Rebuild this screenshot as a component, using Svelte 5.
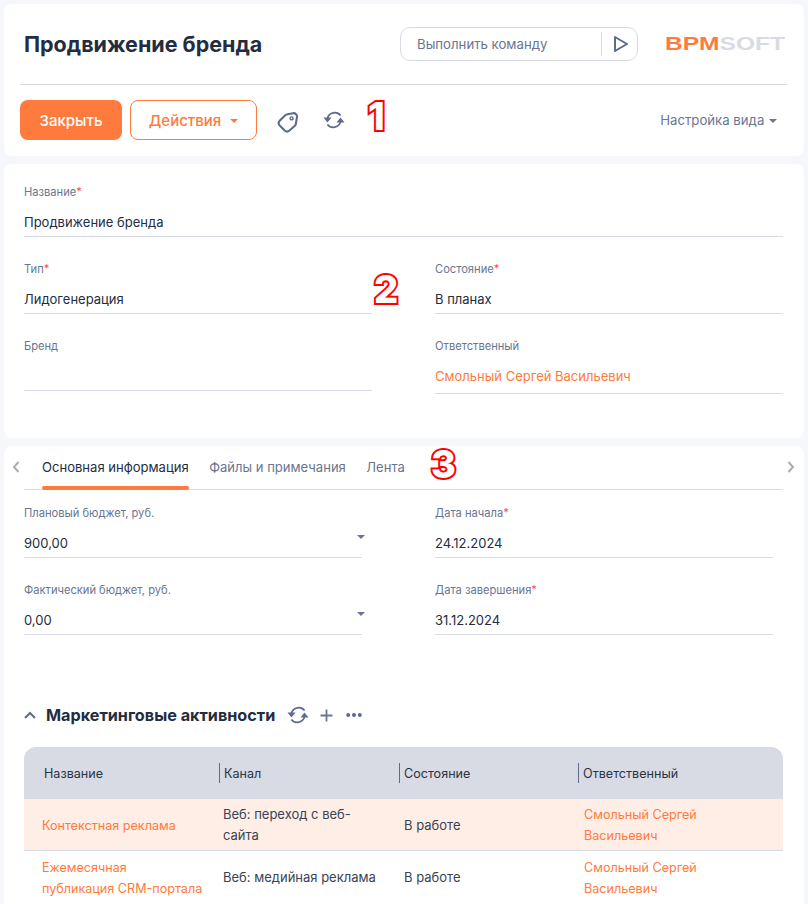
<script>
  const rows = [
    { name: 'Контекстная реклама', channel: 'Веб: переход с веб-сайта', state: 'В работе', owner: 'Смольный Сергей Васильевич', active: true },
    { name: 'Ежемесячная публикация CRM-портала', channel: 'Веб: медийная реклама', state: 'В работе', owner: 'Смольный Сергей Васильевич', active: false }
  ];
  const columns = ['Название', 'Канал', 'Состояние', 'Ответственный'];
</script>

{#snippet sync()}
  <svg class="icon" width="22" height="22" viewBox="0 0 22 22" fill="none" aria-hidden="true">
    <path d="M4.5 9A7.5 7.5 0 0 1 17.6 6.6" stroke="currentColor" stroke-width="1.7"/>
    <path d="M17.5 13A7.5 7.5 0 0 1 4.4 15.4" stroke="currentColor" stroke-width="1.7"/>
    <path d="M0.5 8.5h8l-4 5z" fill="currentColor"/>
    <path d="M13.5 13.5h8l-4-5z" fill="currentColor"/>
  </svg>
{/snippet}

<div class="page">
  <section class="card top">
    <header class="head">
      <h1>Продвижение бренда</h1>
      <div class="command">
        <span class="command-text">Выполнить команду</span>
        <span class="command-btn">
          <svg width="16" height="18" viewBox="0 0 16 18" fill="none"><path d="M2 2l12 7-12 7z" stroke="#5f6b8c" stroke-width="2" stroke-linejoin="round"/></svg>
        </span>
      </div>
      <svg class="logo" width="120" height="22" viewBox="0 0 120 22" role="img" aria-label="BPMSOFT">
        <text x="0" y="17.5" textLength="120" lengthAdjust="spacingAndGlyphs"><tspan class="logo-a">BPM</tspan><tspan class="logo-b">SOFT</tspan></text>
      </svg>
    </header>
    <div class="toolbar">
      <button class="btn primary">Закрыть</button>
      <button class="btn outline">Действия <i class="caret orange"></i></button>
      <span class="tag">
        <svg width="22" height="22" viewBox="0 0 22 22" fill="none"><path d="M9.5 3.5L16 2.2a3.5 3.5 0 0 1 4 4L18.8 13a3 3 0 0 1-.9 1.7l-5.4 4.8a3.5 3.5 0 0 1-4.8 0l-5-5a3.5 3.5 0 0 1 0-4.8L8 4.4a3 3 0 0 1 1.5-.9z" stroke="#5f6b8c" stroke-width="2.1" stroke-linejoin="round"/><circle cx="14.6" cy="7.4" r="1.5" stroke="#5f6b8c" stroke-width="1.4"/></svg>
      </span>
      <span class="refresh">{@render sync()}</span>
      <span class="view">Настройка вида <i class="caret"></i></span>
    </div>
  </section>

  <section class="card main">
    <div class="field full">
      <span class="label">Название<b>*</b></span>
      <div class="value">Продвижение бренда</div>
    </div>
    <div class="cols">
      <div class="field">
        <span class="label">Тип<b>*</b></span>
        <div class="value">Лидогенерация</div>
      </div>
      <div class="field">
        <span class="label">Состояние<b>*</b></span>
        <div class="value">В планах</div>
      </div>
      <div class="field">
        <span class="label">Бренд</span>
        <div class="value"></div>
      </div>
      <div class="field">
        <span class="label">Ответственный</span>
        <div class="value link tall">Смольный Сергей Васильевич</div>
      </div>
    </div>
  </section>

  <section class="card details">
    <nav class="tabs">
      <svg class="chev left" width="10" height="14" viewBox="0 0 10 14" fill="none"><path d="M7.5 2L3 7l4.5 5" stroke="#a9adb5" stroke-width="2"/></svg>
      <span class="tab active">Основная информация</span>
      <span class="tab">Файлы и примечания</span>
      <span class="tab">Лента</span>
      <svg class="chev right" width="10" height="14" viewBox="0 0 10 14" fill="none"><path d="M2.5 2L7 7l-4.5 5" stroke="#a9adb5" stroke-width="2"/></svg>
    </nav>
    <div class="cols narrow">
      <div class="field">
        <span class="label">Плановый бюджет, руб.</span>
        <div class="value">900,00<i class="caret spin"></i></div>
      </div>
      <div class="field">
        <span class="label">Дата начала<b>*</b></span>
        <div class="value">24.12.2024</div>
      </div>
      <div class="field">
        <span class="label">Фактический бюджет, руб.</span>
        <div class="value">0,00<i class="caret spin"></i></div>
      </div>
      <div class="field">
        <span class="label">Дата завершения<b>*</b></span>
        <div class="value">31.12.2024</div>
      </div>
    </div>

    <div class="detail-head">
      <svg width="12" height="8" viewBox="0 0 12 8" fill="none"><path d="M1 7l5-5 5 5" stroke="#5f6b8c" stroke-width="2"/></svg>
      <h2>Маркетинговые активности</h2>
      <span class="tools">
        {@render sync()}
        <svg width="13" height="13" viewBox="0 0 13 13" fill="none"><path d="M6.5 0.5v12M0.5 6.5h12" stroke="#6a7590" stroke-width="1.8"/></svg>
        <svg class="dots" width="16" height="6" viewBox="0 0 16 6"><circle cx="2.2" cy="3" r="2" fill="#5f6b8c"/><circle cx="8" cy="3" r="2" fill="#5f6b8c"/><circle cx="13.8" cy="3" r="2" fill="#5f6b8c"/></svg>
      </span>
    </div>

    <div class="grid">
      <div class="grid-row grid-head">
        {#each columns as col}
          <div class="th">{col}</div>
        {/each}
      </div>
      {#each rows as row}
        <div class="grid-row" class:selected={row.active}>
          <div class="td link">{row.name}</div>
          <div class="td">{row.channel}</div>
          <div class="td">{row.state}</div>
          <div class="td link">{row.owner}</div>
        </div>
      {/each}
    </div>
  </section>

  <span class="mark one">1</span>
  <span class="mark two">2</span>
  <span class="mark three">3</span>
</div>

<style>
  :global(body) {
    margin: 0;
    background: #f5f7fb;
  }
  .page {
    position: relative;
    height: 904px;
    overflow: hidden;
    padding: 4px 4px 0;
    box-sizing: border-box;
    display: flex;
    flex-direction: column;
    gap: 8px;
    font-family: Inter, "Noto Sans", sans-serif;
    font-size: 14px;
    color: #2b3445;
  }
  .card {
    background: #fff;
    border-radius: 8px;
    flex: none;
  }
  .top {
    padding: 0 17px 16px 16px;
  }
  .head {
    display: flex;
    align-items: center;
    height: 80px;
    border-bottom: 1px solid #d8dbe4;
  }
  h1 {
    margin: 0 0 0 4px;
    font-size: 21.5px;
    font-weight: 700;
    color: #232d3f;
    flex: 1;
  }
  .command {
    width: 238px;
    height: 34px;
    box-sizing: border-box;
    border: 1px solid #d8dbe4;
    border-radius: 10px;
    display: flex;
    align-items: center;
    margin-top: -1px;
    font-size: 13.2px;
    color: #6a7590;
  }
  .command-text {
    flex: 1;
    padding-left: 16px;
  }
  .command-btn {
    width: 33px;
    height: 24px;
    padding-left: 2px;
    border-left: 1px solid #d8dbe4;
    display: flex;
    align-items: center;
    justify-content: center;
  }
  .logo {
    margin: -2px 2px 0 27px;
  }
  .logo text {
    font-family: "Liberation Sans", sans-serif;
    font-size: 18px;
    font-weight: 700;
  }
  .logo-a { fill: #ff7a3d; }
  .logo-b { fill: #d8dbe4; }
  .toolbar {
    display: flex;
    align-items: center;
    padding-top: 15px;
    height: 40px;
  }
  .btn {
    height: 40px;
    border-radius: 8px;
    font: 500 15px Inter, "Noto Sans", sans-serif;
    box-sizing: border-box;
  }
  .primary {
    width: 102px;
    background: #ff7a3d;
    border: 0;
    color: #fff;
  }
  .outline {
    width: 127px;
    margin-left: 8px;
    background: #fff;
    border: 1px solid #ff7a3d;
    color: #ff7a3d;
  }
  .caret {
    display: inline-block;
    width: 0;
    height: 0;
    border: 4px solid transparent;
    border-top: 4px solid #6a7590;
    border-bottom: 0;
    vertical-align: middle;
    margin-left: 1px;
  }
  .caret.orange {
    border-top-color: #ff7a3d;
    margin-left: 5px;
  }
  .tag {
    margin-left: 20px;
    display: flex;
    padding-top: 4px;
  }
  .refresh {
    margin-left: 24px;
    display: flex;
    color: #5f6b8c;
  }
  .icon {
    display: block;
  }
  .view {
    margin-left: auto;
    margin-right: 10px;
    font-size: 13.2px;
    color: #6a7590;
  }
  .main {
    height: 274px;
    box-sizing: border-box;
    padding: 18px 21px 0 20px;
  }
  .field {
    display: flex;
    flex-direction: column;
    position: relative;
  }
  .label {
    font-size: 11.15px;
    line-height: 20px;
    margin-bottom: -2px;
    color: #6a7590;
  }
  .label b {
    color: #f0524f;
    font-weight: 400;
  }
  .value {
    height: 28px;
    padding-top: 8px;
    line-height: 28px;
    font-size: 13px;
    color: #232d3f;
    border-bottom: 1px solid #d8dbe4;
    position: relative;
  }
  .value.tall {
    padding-bottom: 3px;
  }
  .link,
  .value.link {
    color: #ff7a3d;
  }
  .full {
    margin-bottom: 22px;
  }
  .cols {
    display: grid;
    grid-template-columns: 348px 348px;
    column-gap: 63px;
    row-gap: 22px;
    align-items: start;
  }
  .narrow {
    grid-template-columns: 338px 338px;
    column-gap: 73px;
    padding: 0 0 0 20px;
  }
  .details {
    height: 470px;
    overflow: hidden;
  }
  .tabs {
    display: flex;
    gap: 20.5px;
    height: 43px;
    margin: 0 21px 13px 20px;
    padding-left: 18px;
    border-bottom: 1px solid #d8dbe4;
    position: relative;
  }
  .chev {
    position: absolute;
    top: 14px;
  }
  .chev.left { left: -13px; }
  .chev.right { right: -13px; }
  .tab {
    font-size: 13.05px;
    line-height: 42px;
    color: #6a7590;
    position: relative;
  }
  .tab.active {
    color: #232d3f;
  }
  .tab.active::after {
    content: "";
    position: absolute;
    left: 0;
    right: 0;
    bottom: -1px;
    height: 4px;
    border-radius: 2px;
    background: #ff7a3d;
  }
  .spin {
    position: absolute;
    right: -3px;
    top: 14px;
    margin: 0;
  }
  .detail-head {
    display: flex;
    align-items: center;
    margin: 64px 0 0 20px;
    height: 32px;
  }
  .detail-head svg {
    flex: none;
  }
  h2 {
    margin: 0 0 0 10px;
    font-size: 16.2px;
    font-weight: 700;
    color: #232d3f;
  }
  .tools {
    display: flex;
    align-items: center;
    gap: 11px;
    margin-left: 12px;
    color: #5f6b8c;
  }
  .dots {
    margin-left: 2px;
  }
  .grid {
    margin: 16px 21px 0 20px;
    font-size: 13px;
  }
  .grid-row {
    display: grid;
    grid-template-columns: 195px 180px 179px 205px;
    align-items: center;
    border-bottom: 1px solid #d8dbe4;
    min-height: 50px;
  }
  .grid-row:last-child {
    padding-top: 2px;
    min-height: 56px;
    align-items: start;
    border-bottom: 0;
  }
  .grid-head {
    height: 52px;
    background: #d8dbe4;
    border-radius: 12px 12px 0 0;
    border-bottom: 0;
  }
  .th {
    padding-left: 5px;
    position: relative;
    font-size: 12.6px;
    color: #2b3445;
  }
  .th:first-child {
    padding-left: 20px;
  }
  .th + .th::before {
    content: "";
    position: absolute;
    left: 0;
    top: 50%;
    margin-top: -10px;
    height: 20px;
    width: 1px;
    background: #5f6b8c;
  }
  .selected {
    background: #ffeee6;
    padding-top: 1px;
  }
  .td {
    padding: 4px 18px 4px 4px;
    line-height: 21px;
  }
  .grid-row:last-child .td:not(.link) {
    padding-top: 14px;
  }
  .td:first-child {
    padding-left: 18px;
    padding-right: 4px;
    text-wrap: balance;
  }
  .td:nth-child(3) {
    padding-left: 5px;
  }
  .td:nth-child(4) {
    padding-left: 6px;
  }
  .td.link {
    font-size: 12.6px;
  }
  .td:not(.link) {
    color: #3a4356;
  }
  .mark {
    position: absolute;
    font: 800 38px/1 Inter, "Liberation Sans", sans-serif;
    color: #fff;
    -webkit-text-stroke: 4px #f00;
    paint-order: stroke fill;
  }
  .one { left: 368px; top: 97px; }
  .two { left: 374px; top: 270px; }
  .three { left: 431px; top: 445px; }
</style>
